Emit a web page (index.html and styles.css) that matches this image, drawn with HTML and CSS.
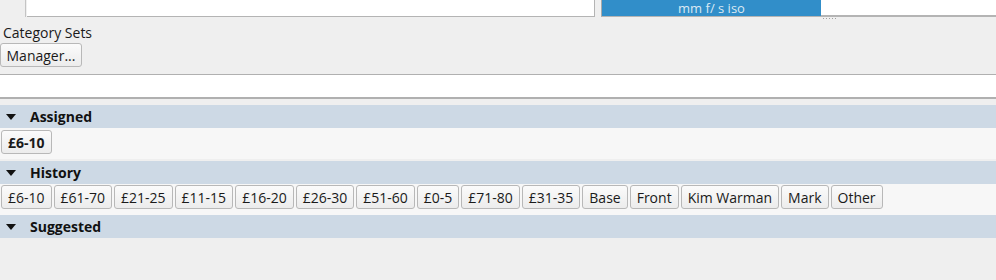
FILE: index.html
```html
<!DOCTYPE html>
<html lang="en">
<head>
    <meta charset="UTF-8">
    <title>Categories</title>
    <link rel="stylesheet" href="styles.css">
</head>
<body>
    <div class="top-row">
        <div class="gutter"></div>
        <div class="field"></div>
        <div class="spacer"></div>
        <div class="exif">mm f/ s iso</div>
        <div class="blank">
            <span class="grip"></span>
        </div>
    </div>

    <div class="sets">
        <div class="sets-label">Category Sets</div>
        <button class="btn">Manager...</button>
    </div>

    <div class="search"></div>

    <div class="section assigned">
        <div class="section-head"><span class="arrow"></span>Assigned</div>
        <div class="section-body">
            <button class="btn chip bold">£6-10</button>
        </div>
    </div>

    <div class="section history">
        <div class="section-head"><span class="arrow"></span>History</div>
        <div class="section-body">
            <button class="btn chip">£6-10</button>
            <button class="btn chip">£61-70</button>
            <button class="btn chip">£21-25</button>
            <button class="btn chip">£11-15</button>
            <button class="btn chip">£16-20</button>
            <button class="btn chip">£26-30</button>
            <button class="btn chip">£51-60</button>
            <button class="btn chip">£0-5</button>
            <button class="btn chip">£71-80</button>
            <button class="btn chip">£31-35</button>
            <button class="btn chip">Base</button>
            <button class="btn chip">Front</button>
            <button class="btn chip">Kim Warman</button>
            <button class="btn chip">Mark</button>
            <button class="btn chip">Other</button>
        </div>
    </div>

    <div class="section suggested">
        <div class="section-head"><span class="arrow"></span>Suggested</div>
    </div>
</body>
</html>
```

FILE: styles.css
```css
body {
    margin: 0;
    background: #efefef;
    font-family: "Open Sans", "DejaVu Sans", sans-serif;
    font-size: 13px;
    color: #1a1a1a;
    height: 280px;
    overflow: hidden;
}
.top-row {
    display: flex;
    height: 17px;
}
.gutter {
    width: 25px;
    border-right: 1px solid #c4c4c4;
}
.field {
    width: 567px;
    margin-left: 1px;
    background: #fff;
    border-bottom: 1px solid #b4b4b4;
    border-right: 1px solid #b4b4b4;
}
.spacer {
    width: 6px;
}
.exif {
    width: 219px;
    background: #318ec9;
    border-left: 1px solid #a9a9a9;
    border-bottom: 1px solid #b4b4b4;
    color: #dbe9f3;
    text-align: center;
    font-size: 13px;
    line-height: 16px;
    height: 16px;
}
.blank {
    flex: 1;
    background: #fff;
    border-bottom: 2px solid #b4b4b4;
    position: relative;
    height: 15px;
}
.grip {
    position: absolute;
    left: 1px;
    top: 18px;
    width: 16px;
    height: 1px;
    background-image: radial-gradient(circle, #a0a0a0 0.6px, transparent 0.7px);
    background-size: 3px 1px;
}
.sets {
    padding-top: 7px;
}
.sets-label {
    padding-left: 3px;
    line-height: 18px;
    font-size: 14px;
}
.btn {
    font-family: inherit;
    font-size: 14px;
    color: #1a1a1a;
    background: linear-gradient(#fbfbfb, #ececec);
    border: 1px solid #b8b8b8;
    border-radius: 3px;
    padding: 0 6px;
    height: 24px;
    margin: 0;
}
.sets .btn {
    margin-top: 1px;
    width: 82px;
    padding: 0;
}
.search {
    margin-top: 7px;
    height: 22px;
    background: #fff;
    border-top: 1px solid #b0b0b0;
    border-bottom: 2px solid #b0b0b0;
}
.section-head {
    background: #cdd9e5;
    height: 23px;
    font-weight: bold;
    font-size: 14px;
    color: #111;
    display: flex;
    align-items: center;
}
.arrow {
    width: 0;
    height: 0;
    border-left: 5px solid transparent;
    border-right: 5px solid transparent;
    border-top: 6px solid #111;
    margin: 0 14px 0 6px;
}
.section-body {
    background: #f7f7f7;
    display: flex;
    flex-wrap: wrap;
    gap: 2px;
    padding: 0 1px;
}
.assigned {
    margin-top: 6px;
}
.assigned .section-body {
    padding-top: 2px;
    padding-bottom: 5px;
}
.history {
    margin-top: 2px;
}
.history .section-body {
    padding-top: 1px;
    padding-bottom: 6px;
}
.bold {
    font-weight: bold;
}
```
